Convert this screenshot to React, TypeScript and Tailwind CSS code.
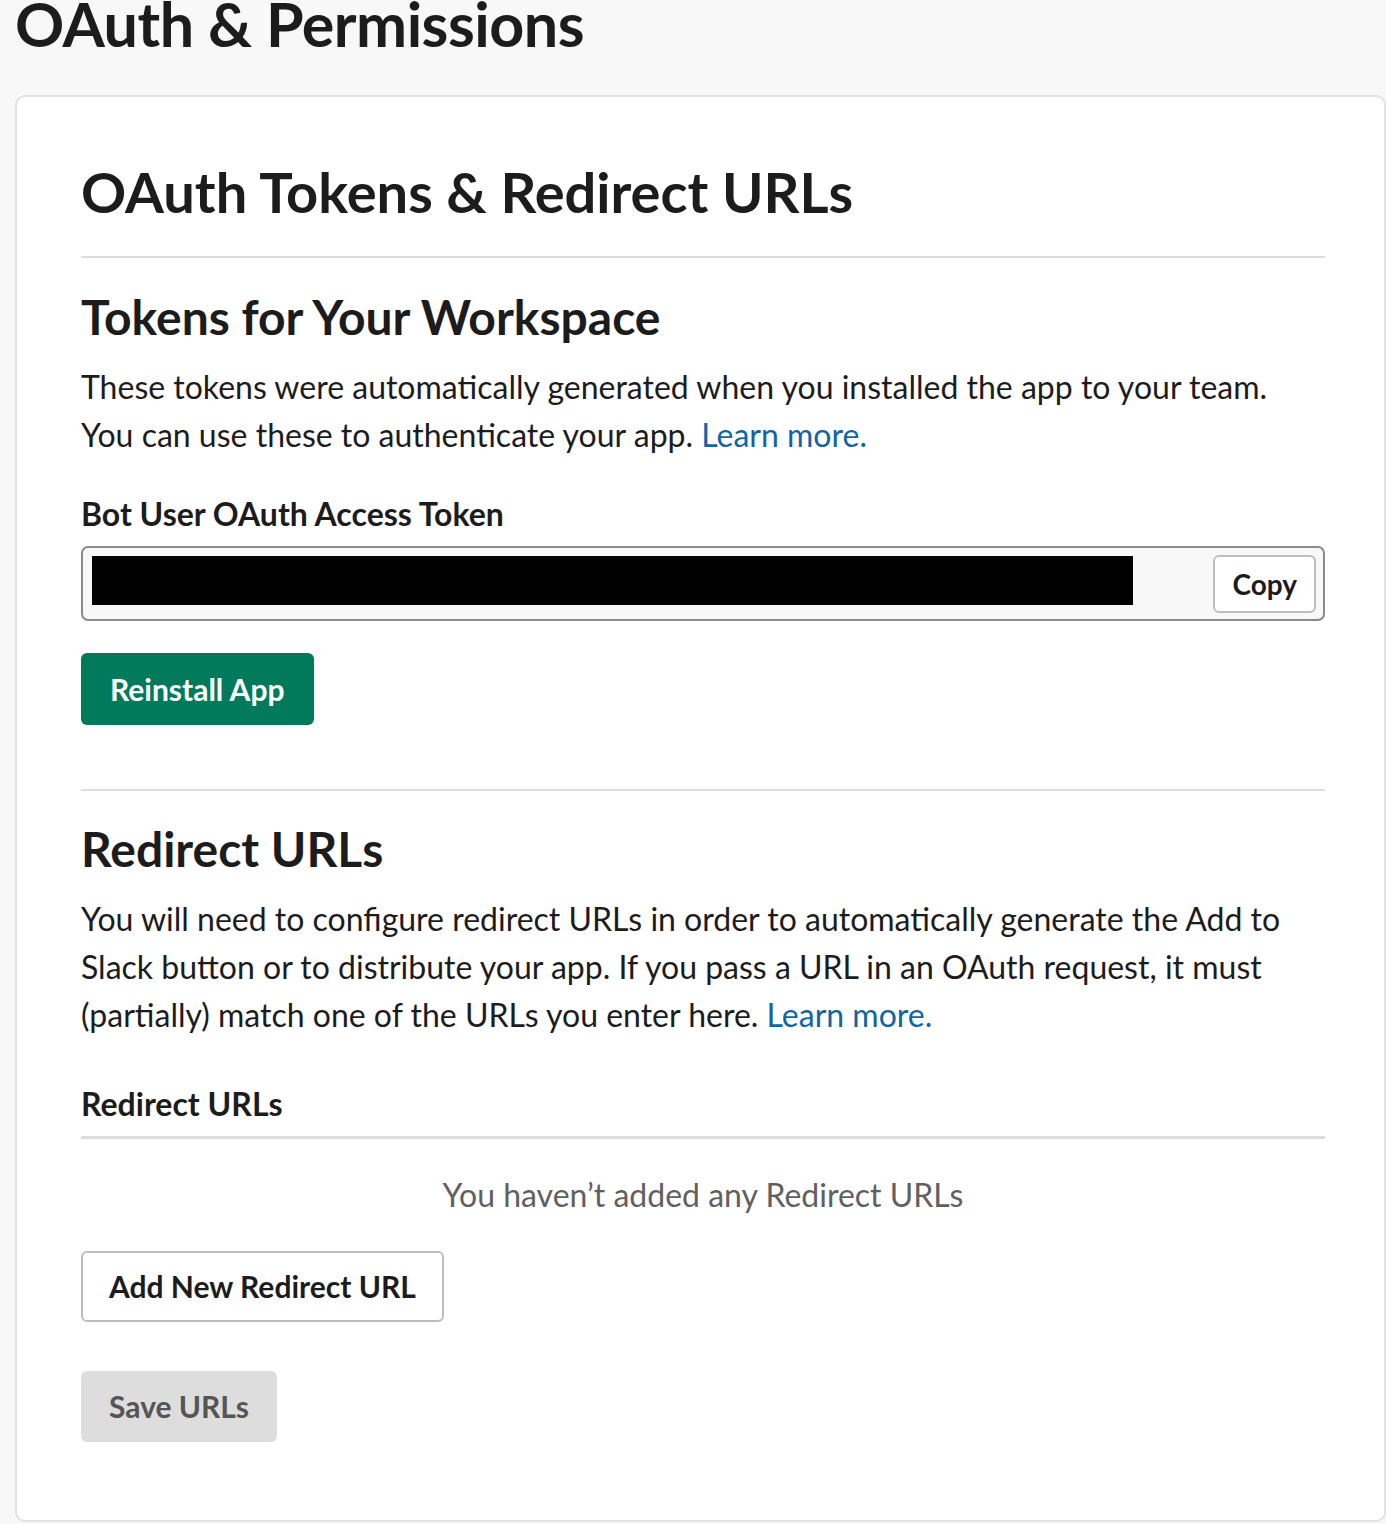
import React from "react";

export default function App() {
  return (
    <div className="min-h-[1524px] w-[1386px] overflow-hidden bg-[#f8f8f8] text-[#1d1c1d] [font-family:Lato,'Noto_Sans',sans-serif]">
      <h1 className="ml-[15px] mt-[-13px] text-[61px] font-bold leading-[1.2] tracking-[-0.5px]">
        OAuth &amp; Permissions
      </h1>
      <div className="ml-[15px] mt-[35px] w-[1371px] rounded-[10px] border-2 border-[#e2e2e2] bg-white pl-[64px] pr-[59px] pt-[61px] pb-[78px]">
        <h2 className="text-[56px] font-bold leading-[1.2]">OAuth Tokens &amp; Redirect URLs</h2>
        <div className="mt-[31px] h-[2px] bg-[#dddddd]" />
        <h3 className="mt-[30px] text-[48px] font-bold leading-[1.2]">Tokens for Your Workspace</h3>
        <p className="mt-[17px] text-[32px] leading-[48px]">
          These tokens were automatically generated when you installed the app to your team.
          <br />
          You can use these to authenticate your app.{" "}
          <span className="text-[#1264a3]">Learn more.</span>
        </p>
        <div className="mt-[36px] text-[32px] font-bold leading-[1.2]">Bot User OAuth Access Token</div>
        <div className="mt-[13px] flex h-[75px] items-center justify-between rounded-[7px] border-2 border-[#8a8a8a] bg-[#f8f8f8] pl-[9px] pr-[7px]">
          <div className="mb-[6px] h-[49px] w-[1041px] bg-black" />
          <button className="h-[58px] rounded-[6px] border-2 border-[#bdbdbd] bg-white px-[17px] text-[28px] font-bold text-[#1d1c1d]">
            Copy
          </button>
        </div>
        <button className="mt-[32px] block h-[72px] rounded-[6px] bg-[#007a5a] px-[29px] text-[30px] font-bold text-white">
          Reinstall App
        </button>
        <div className="mt-[64px] h-[2px] bg-[#dddddd]" />
        <h3 className="mt-[29px] text-[48px] font-bold leading-[1.2]">Redirect URLs</h3>
        <p className="mt-[17px] text-[32px] leading-[48px]">
          You will need to configure redirect URLs in order to automatically generate the Add to
          <br />
          Slack button or to distribute your app. If you pass a URL in an OAuth request, it must
          <br />
          (partially) match one of the URLs you enter here.{" "}
          <span className="text-[#1264a3]">Learn more.</span>
        </p>
        <div className="mt-[46px] text-[32px] font-bold leading-[1.2]">Redirect URLs</div>
        <div className="mt-[13px] h-[3px] bg-[#dddddd]" />
        <div className="mt-[37px] text-center text-[32px] leading-[1.2] text-[#616061]">
          You haven’t added any Redirect URLs
        </div>
        <button className="mt-[36px] block h-[71px] rounded-[6px] border-2 border-[#bdbdbd] bg-white px-[26px] text-[30px] font-bold text-[#1d1c1d]">
          Add New Redirect URL
        </button>
        <button className="mt-[49px] block h-[71px] rounded-[6px] bg-[#dddddd] px-[28px] text-[30px] font-bold text-[#555555]">
          Save URLs
        </button>
      </div>
    </div>
  );
}
